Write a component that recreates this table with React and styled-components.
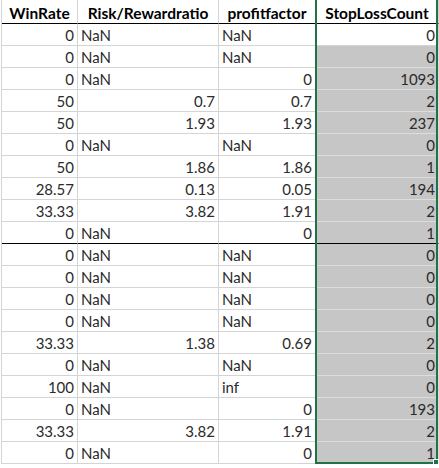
import React from "react";
import styled, { createGlobalStyle } from "styled-components";

const GlobalStyle = createGlobalStyle`
  html, body {
    margin: 0;
    padding: 0;
    background: #fff;
    overflow: hidden;
  }
  body {
    font-family: Lato, "Open Sans", sans-serif;
  }
`;

const GRID = "#d4d4d4";

const Sheet = styled.div`
  position: relative;
  margin-left: 1px;
  border-left: 1px solid ${GRID};
  display: grid;
  grid-template-columns: 76px 141px 97px 123px;
  width: 437px;
`;

const HeadCell = styled.div`
  box-sizing: border-box;
  height: 24px;
  padding-top: 4px;
  border-right: 1px solid ${GRID};
  border-bottom: 1px solid #000;
  font-size: 15.5px;
  font-weight: 700;
  color: #000;
  text-align: center;
  line-height: 18px;
  white-space: nowrap;
`;

const Cell = styled.div`
  box-sizing: border-box;
  height: 22px;
  padding: 1px 3px 0;
  border-right: 1px solid ${({ $selected }) => ($selected ? "#dcdcdc" : GRID)};
  border-bottom: 1px solid
    ${({ $strong, $selected }) => ($strong ? "#000" : $selected ? "#dcdcdc" : GRID)};
  background: ${({ $selected }) => ($selected ? "#c6c6c6" : "#fff")};
  font-size: 15px;
  line-height: 20px;
  color: #2b2b2b;
  text-align: ${({ $align }) => $align};
  white-space: nowrap;
`;

const SelectionFrame = styled.div`
  position: absolute;
  left: 313px;
  top: -4px;
  width: 123px;
  height: 468px;
  box-sizing: border-box;
  border: 2px solid #217346;
  pointer-events: none;

  &::after {
    content: "";
    position: absolute;
    right: -3px;
    bottom: -3px;
    width: 4px;
    height: 4px;
    background: #217346;
    border: 1px solid #fff;
  }
`;

const headers = ["WinRate", "Risk/Rewardratio", "profitfactor", "StopLossCount"];

const rows = [
  ["0", "NaN", "NaN", "0"],
  ["0", "NaN", "NaN", "0"],
  ["0", "NaN", "0", "1093"],
  ["50", "0.7", "0.7", "2"],
  ["50", "1.93", "1.93", "237"],
  ["0", "NaN", "NaN", "0"],
  ["50", "1.86", "1.86", "1"],
  ["28.57", "0.13", "0.05", "194"],
  ["33.33", "3.82", "1.91", "2"],
  ["0", "NaN", "0", "1"],
  ["0", "NaN", "NaN", "0"],
  ["0", "NaN", "NaN", "0"],
  ["0", "NaN", "NaN", "0"],
  ["0", "NaN", "NaN", "0"],
  ["33.33", "1.38", "0.69", "2"],
  ["0", "NaN", "NaN", "0"],
  ["100", "NaN", "inf", "0"],
  ["0", "NaN", "0", "193"],
  ["33.33", "3.82", "1.91", "2"],
  ["0", "NaN", "0", "1"]
];

const isNumber = v => v !== "" && !isNaN(Number(v));

export default function App() {
  return (
    <>
      <GlobalStyle />
      <Sheet>
        {headers.map(h => (
          <HeadCell key={h}>{h}</HeadCell>
        ))}
        {rows.map((row, r) =>
          row.map((v, c) => (
            <Cell
              key={`${r}-${c}`}
              $align={isNumber(v) ? "right" : "left"}
              $strong={r === 9}
              $selected={c === 3 && r > 0}
            >
              {v}
            </Cell>
          ))
        )}
        <SelectionFrame />
      </Sheet>
    </>
  );
}
